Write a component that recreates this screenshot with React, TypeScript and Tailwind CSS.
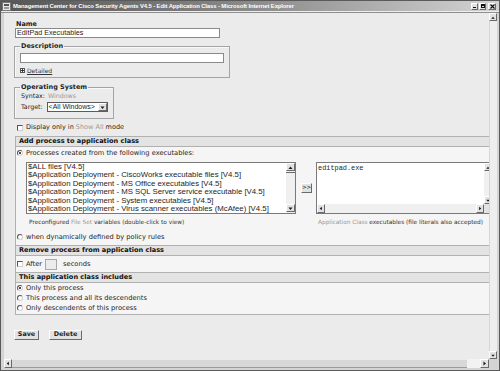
import React from 'react';

const dv = "font-['DejaVu_Sans',Verdana,sans-serif]";
const lib = "font-['Liberation_Sans',Arial,sans-serif]";
const raised = 'border border-t-white border-l-white border-b-[#6a6a6a] border-r-[#6a6a6a] bg-[#e2e2e2]';

function Tri({ dir }: { dir: 'up' | 'down' | 'left' | 'right' }) {
  const pts = {
    up: '1.5,5 3.5,2.5 5.5,5',
    down: '1.5,2.5 3.5,5 5.5,2.5',
    left: '4.5,1.5 2,3.5 4.5,5.5',
    right: '2.5,1.5 5,3.5 2.5,5.5',
  }[dir];
  return (
    <svg width="7" height="7" viewBox="0 0 7 7">
      <polygon points={pts} fill="#1a1a1a" />
    </svg>
  );
}

function ArrowBtn({ dir, className = '' }: { dir: 'up' | 'down' | 'left' | 'right'; className?: string }) {
  return (
    <div className={`${raised} flex items-center justify-center shrink-0 ${className}`}>
      <Tri dir={dir} />
    </div>
  );
}

function Radio({ on }: { on?: boolean }) {
  return (
    <span className="inline-flex w-[6px] h-[6px] rounded-full border border-t-[#555] border-l-[#555] border-b-[#d0d0d0] border-r-[#d0d0d0] bg-white items-center justify-center shrink-0">
      {on && <span className="w-[2px] h-[2px] rounded-full bg-[#111]" />}
    </span>
  );
}

function Check() {
  return <span className="w-[6px] h-[6px] border border-t-[#555] border-l-[#555] border-b-[#d0d0d0] border-r-[#d0d0d0] bg-white shrink-0" />;
}

function SectionHead({ title }: { title: string }) {
  return (
    <div className={`h-[11px] bg-[#e3e3e3] border-y border-[#b0b0b0] pl-[3px] ${dv} font-bold text-[6.6px] leading-[9px] text-[#111]`}>
      {title}
    </div>
  );
}

const files = [
  '$ALL files [V4.5]',
  '$Application Deployment - CiscoWorks executable files [V4.5]',
  '$Application Deployment - MS Office executables [V4.5]',
  '$Application Deployment - MS SQL Server service executable [V4.5]',
  '$Application Deployment - System executables [V4.5]',
  '$Application Deployment - Virus scanner executables (McAfee) [V4.5]',
];

export default function App() {
  return (
    <div className="w-[500px] h-[371px] flex flex-col bg-[#d4d4d4] border border-[#5a5a5a] overflow-hidden">
      {/* Title bar */}
      <div className="h-[10px] flex items-center bg-linear-to-r from-[#555555] via-[#8a8a8a] to-[#d4d4d4] pl-[1px] pr-[3px]">
        <svg width="9" height="9" viewBox="0 0 9 9" className="shrink-0">
          <rect x="0.5" y="0.5" width="8" height="8" fill="#e8e8e8" stroke="#777" />
          <rect x="2" y="2" width="5" height="2" fill="#555" />
          <rect x="2" y="5" width="5" height="2" fill="#999" />
        </svg>
        <span className={`ml-[2px] ${lib} font-bold text-[5.9px] leading-[10px] text-white whitespace-nowrap tracking-[-0.1px]`}>
          Management Center for Cisco Security Agents V4.5 - Edit Application Class - Microsoft Internet Explorer
        </span>
        <div className="ml-auto flex gap-[1px]">
          <div className={`${raised} w-[7px] h-[7px] flex items-end justify-center pb-[1px]`}>
            <span className="w-[3px] h-[1px] bg-[#111]" />
          </div>
          <div className={`${raised} w-[7px] h-[7px] flex items-center justify-center`}>
            <span className="w-[4px] h-[4px] border border-t-2 border-[#111]" />
          </div>
          <div className={`${raised} w-[8px] h-[7px] ml-[1px] flex items-center justify-center`}>
            <svg width="5" height="5" viewBox="0 0 5 5">
              <path d="M0.5 0.5L4.5 4.5M4.5 0.5L0.5 4.5" stroke="#111" strokeWidth="1.2" />
            </svg>
          </div>
        </div>
      </div>
      <div className="h-[2px] border-t border-[#eeeeee] bg-[#8e8e8e]" />

      {/* Window body */}
      <div className="flex-1 min-h-0 flex flex-col pl-[3px] pr-[2px] pb-[2px]">
        <div className="flex-1 min-h-0 flex">
          <div className="flex-1 min-w-0 overflow-hidden bg-[#ebebeb] text-[#1e1e1e]">
            <div className="w-[490px] pt-[7px] pl-[11px]">
              <div className={`${dv} font-bold text-[6.5px] leading-[8px] h-[8px] pl-[1px]`}>Name</div>
              <div className={`w-[205px] h-[10px] bg-white border border-[#8a8a8a] flex items-center pl-[1px] ${lib} text-[7.2px]`}>
                EditPad Executables
              </div>

              <fieldset className="ml-[-1px] mt-[4px] w-[215px] h-[36px] border border-[#a4a4a4] px-[5px] shadow-[inset_1px_1px_0_#f8f8f8]">
                <legend className={`px-[1px] ${dv} font-bold text-[6.5px] leading-[8px]`}>Description</legend>
                <div className="mt-[3px] w-[204px] h-[10px] bg-white border border-[#8a8a8a]" />
                <div className="mt-[3px] h-[8px] flex items-center gap-[2px]">
                  <span className="w-[5px] h-[5px] border border-[#555] bg-white flex items-center justify-center">
                    <svg width="3" height="3" viewBox="0 0 3 3">
                      <path d="M0 1.5H3M1.5 0V3" stroke="#111" strokeWidth="0.8" />
                    </svg>
                  </span>
                  <span className={`${dv} text-[6px] underline text-[#333]`}>Detailed</span>
                </div>
              </fieldset>

              <fieldset className="ml-[-1px] mt-[5px] w-[97px] h-[36px] border border-[#a4a4a4] px-[5px] shadow-[inset_1px_1px_0_#f8f8f8]">
                <legend className={`px-[1px] ${dv} font-bold text-[6.5px] leading-[8px]`}>Operating System</legend>
                <div className={`h-[10px] flex items-center ${dv} text-[6.3px] pl-[1px]`}>
                  Syntax:<span className="ml-[3px] text-[#9a9a9a]">Windows</span>
                </div>
                <div className={`h-[12px] flex items-center ${dv} text-[6.3px] pl-[1px]`}>
                  Target:
                  <div className="ml-[4px] w-[61px] h-[10px] bg-white border border-[#5c5c5c] flex items-center">
                    <span className={`flex-1 pl-[1px] ${lib} text-[7px] whitespace-nowrap`}>&lt;All Windows&gt;</span>
                    <ArrowBtn dir="down" className="w-[9px] h-[8px]" />
                  </div>
                </div>
              </fieldset>

              <div className={`mt-[4px] h-[9px] flex items-center gap-[3px] pl-[2px] ${dv} text-[6.5px]`}>
                <Check />
                <span>
                  Display only in <span className="text-[#9a9a9a]">Show All</span> mode
                </span>
              </div>

              {/* Sections */}
              <div className="mt-[4px] w-[480px] border-x border-b border-[#b0b0b0] bg-[#f5f5f5]">
                <SectionHead title="Add process to application class" />
                <div className={`h-[98px] pt-[1px] pl-[1px] ${dv} text-[6.7px]`}>
                  <div className="h-[10px] flex items-center gap-[3px]">
                    <Radio on />
                    <span>Processes created from the following executables:</span>
                  </div>
                  <div className="mt-[4px] flex items-center">
                    <div className="ml-[9px] w-[270px] h-[52px] bg-white border border-[#7a7a7a] flex">
                      <div className={`flex-1 min-w-0 overflow-hidden ${lib} text-[7.8px] leading-[8.4px] pl-[1px] whitespace-nowrap`}>
                        {files.map((f) => (
                          <div key={f}>{f}</div>
                        ))}
                      </div>
                      <div className="w-[9px] flex flex-col bg-[#f0f0f0]">
                        <ArrowBtn dir="up" className="h-[8px]" />
                        <div className="h-[1px] bg-[#6a6a6a] mt-[1px]" />
                        <div className="flex-1" />
                        <ArrowBtn dir="down" className="h-[8px] mb-[1px]" />
                      </div>
                    </div>
                    <div className={`ml-[5px] w-[11px] h-[10px] ${raised} flex items-center justify-center ${dv} text-[5.5px] leading-none`}>
                      &gt;&gt;
                    </div>
                    <div className="ml-[4px] w-[177px] h-[52px] bg-white border border-[#7a7a7a] flex">
                      <div className="flex-1 min-w-0 flex flex-col">
                        <div className="flex-1 font-['Liberation_Mono',monospace] text-[6.9px] leading-[8px] pl-[1px] pt-[1px]">editpad.exe</div>
                        <div className="h-[9px] flex bg-[#f0f0f0]">
                          <ArrowBtn dir="left" className="w-[8px]" />
                          <div className="flex-1" />
                          <ArrowBtn dir="right" className="w-[8px]" />
                        </div>
                      </div>
                      <div className="w-[8px] flex flex-col bg-[#f0f0f0]">
                        <ArrowBtn dir="up" className="h-[8px]" />
                        <div className="flex-1" />
                        <ArrowBtn dir="down" className="h-[8px]" />
                        <div className="h-[9px] bg-[#e2e2e2]" />
                      </div>
                    </div>
                  </div>
                  <div className="mt-[4px] h-[8px] flex items-center text-[5.8px] text-[#333]">
                    <span className="ml-[12px] w-[289px]">
                      Preconfigured <span className="text-[#9a9a9a]">File Set</span> variables (double-click to view)
                    </span>
                    <span>
                      <span className="text-[#9a9a9a]">Application Class</span> executables (file literals also accepted)
                    </span>
                  </div>
                  <div className="mt-[6px] h-[10px] flex items-center gap-[3px]">
                    <Radio />
                    <span>when dynamically defined by policy rules</span>
                  </div>
                </div>

                <SectionHead title="Remove process from application class" />
                <div className={`h-[16px] flex items-center gap-[3px] pl-[1px] ${dv} text-[6.7px]`}>
                  <Check />
                  <span>After</span>
                  <div className="w-[12px] h-[11px] bg-[#ececec] border border-[#a8a8a8]" />
                  <span className="ml-[3px]">seconds</span>
                </div>

                <SectionHead title="This application class includes" />
                <div className={`pb-[1px] pl-[1px] ${dv} text-[6.7px]`}>
                  <div className="h-[10px] flex items-center gap-[3px]">
                    <Radio on />
                    <span>Only this process</span>
                  </div>
                  <div className="h-[10px] flex items-center gap-[3px]">
                    <Radio />
                    <span>This process and all its descendents</span>
                  </div>
                  <div className="h-[10px] flex items-center gap-[3px]">
                    <Radio />
                    <span>Only descendents of this process</span>
                  </div>
                </div>
              </div>

              <div className={`mt-[15px] ml-[-1px] flex gap-[10px] ${dv} font-bold text-[6.4px]`}>
                <div className={`${raised} w-[25px] h-[10px] flex items-center justify-center`}>Save</div>
                <div className={`${raised} w-[33px] h-[10px] flex items-center justify-center`}>Delete</div>
              </div>
            </div>
          </div>

          {/* vertical scrollbar */}
          <div className="w-[8px] flex flex-col bg-[#eeeeee]">
            <ArrowBtn dir="up" className="h-[8px]" />
            <div className="flex-1 border-l border-[#d6d6d6]" />
            <ArrowBtn dir="down" className="h-[8px]" />
          </div>
        </div>

        {/* horizontal scrollbar */}
        <div className="h-[9px] flex bg-[#f2f2f2]">
          <ArrowBtn dir="left" className="w-[8px]" />
          <div className="w-[455px] bg-[#d8d8d8] border-t border-[#ececec] border-b border-b-[#9a9a9a]" />
          <div className="flex-1" />
          <ArrowBtn dir="right" className="w-[9px]" />
          <div className="w-[8px] bg-[#d4d4d4]" />
        </div>
      </div>
    </div>
  );
}
